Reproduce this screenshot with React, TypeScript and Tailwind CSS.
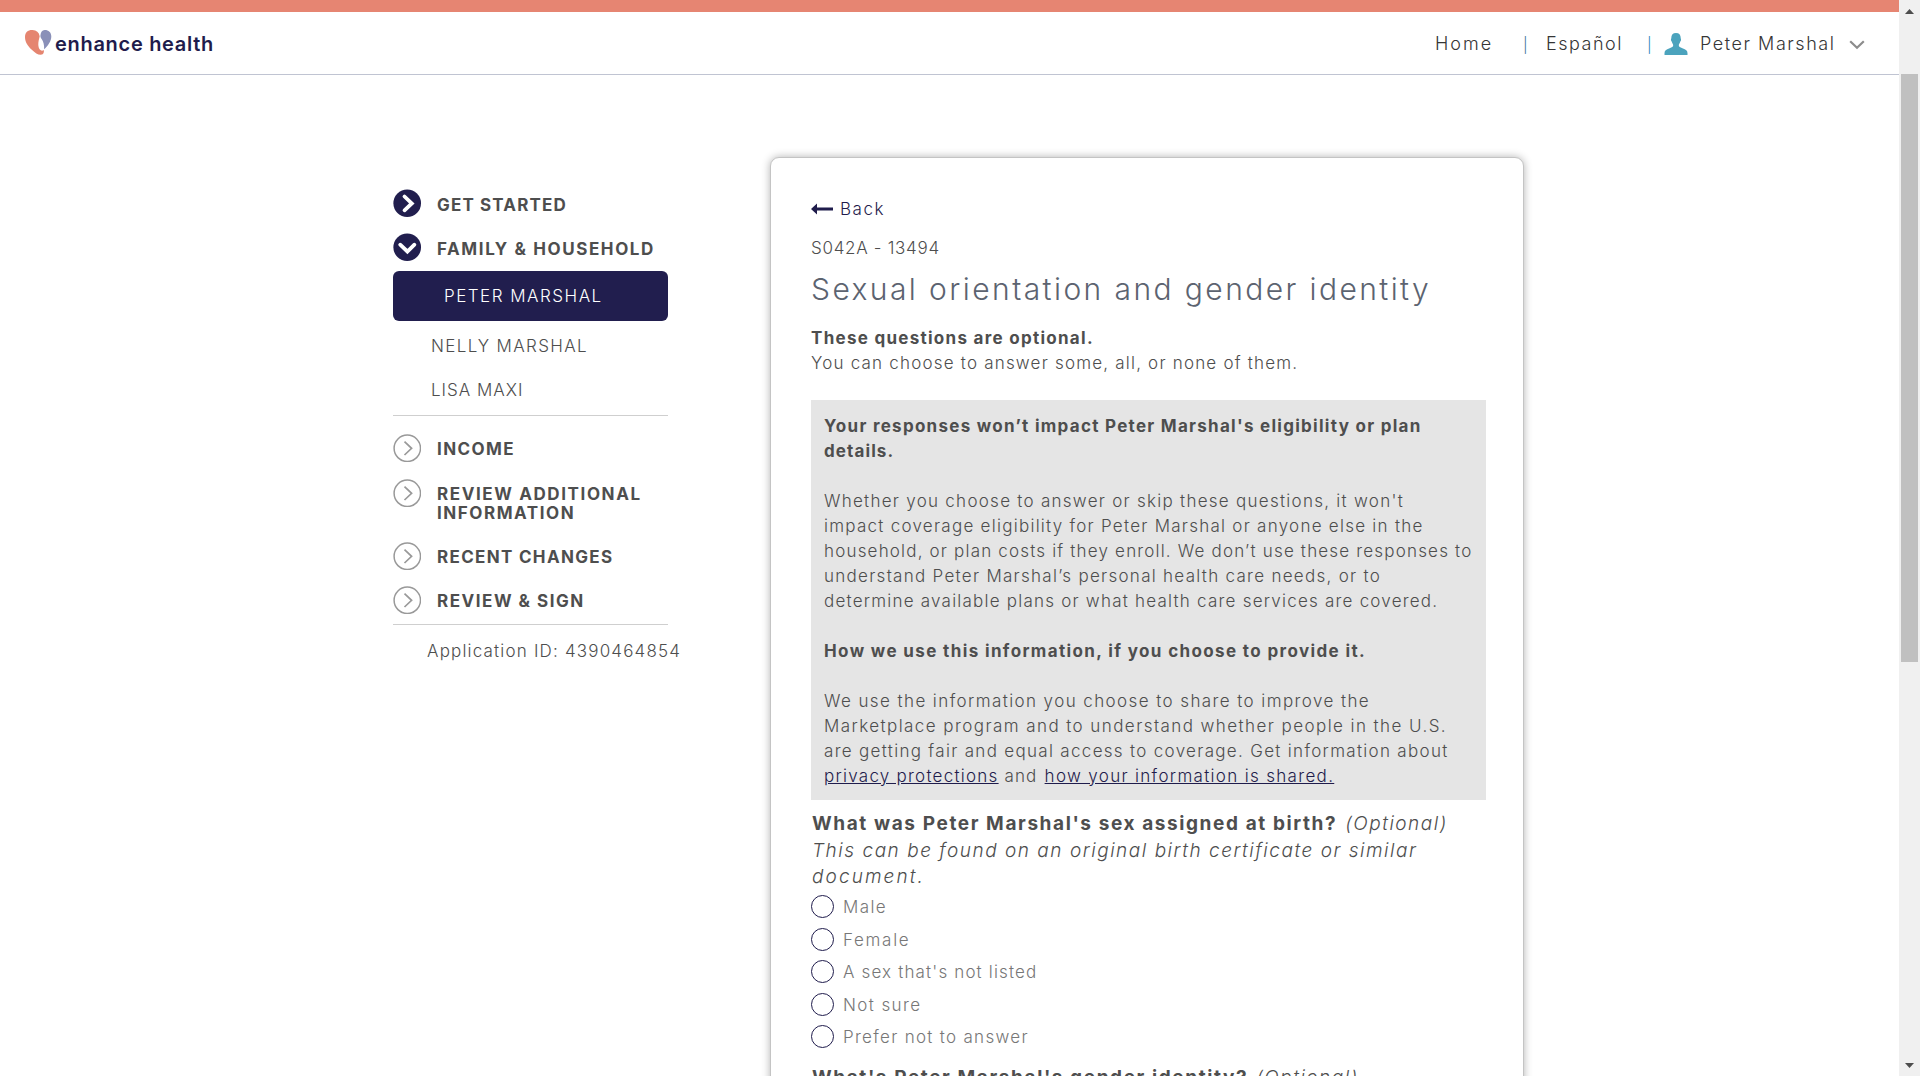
import type { ReactNode } from "react";

type Line = [text: string, tracking: string];

function Lines({ lines, className = "" }: { lines: Line[]; className?: string }) {
  return (
    <p className={className}>
      {lines.map(([text, tracking]) => (
        <span key={text} className={`block whitespace-nowrap ${tracking}`}>
          {text}
        </span>
      ))}
    </p>
  );
}

function Logo() {
  return (
    <a href="#" className="flex h-[62px] items-center pl-[24px]">
      <svg width="28" height="28" viewBox="0 0 28 28" className="shrink-0">
        <path
          d="M8.500 1.100C4 .9 1 3.600 1 8c0 5.300 3 9.300 6.800 12.700 3.200 3 5.900 5 8.800 5 2 0 3.300-1.300 3.300-3.300l-.1-1.300c-1.200.9-3 .9-4-.5-1-1.300-1.500-3-1.500-5.300 0-3.100.8-5.400 1.400-8.100C15 3.400 12.500 1.300 8.500 1.100z"
          fill="#e58570"
        />
        <path
          d="M20.600 1c3.800-.1 6.700 2.200 6.700 6.400 0 4.700-3.400 9.300-7.200 12.800.3-4-.7-7.800-2.500-10.200-1-1.300-1.400-2.500-1.100-4C16.900 3.300 18 1.100 20.600 1z"
          fill="#8a90b8"
        />
      </svg>
      <span className="ml-[3px] pt-[2px] text-[20px] leading-6 font-semibold tracking-[0.7px] text-[#1f1c4c]">
        enhance health
      </span>
    </a>
  );
}

function UserMenu() {
  return (
    <nav className="flex h-[62px] items-center pr-[34px] text-[18px] leading-7 whitespace-nowrap text-[#363636]">
      <a href="#" className="w-[88px] pt-[2px] tracking-[2px]">Home</a>
      <span className="w-[23px] pt-[3px] text-[15px] text-[#3d6f96]">|</span>
      <a href="#" className="w-[101px] pt-[2px] tracking-[1.5px]">Español</a>
      <span className="w-[17px] pt-[3px] text-[15px] text-[#1f86c0]">|</span>
      <svg width="24" height="22" viewBox="0 0 24 22" fill="#4ba3bd" className="mt-[2px]">
        <path d="M12 0c3.200 0 4.700 1.900 4.700 5 0 .8.500 1.200.3 2.200-.2.800-.7 1-.9 1.800-.4 1.500-1.300 1.900-1.300 3.300 0 1.600 1.200 2 3.600 2.900 3.600 1.200 5.100 2.300 5.100 5.100V22H.5v-1.700c0-2.800 1.500-3.900 5.100-5.100 2.400-.9 3.600-1.300 3.600-2.900 0-1.400-.9-1.800-1.300-3.300-.2-.8-.7-1-.9-1.800-.2-1 .3-1.400.3-2.200 0-3.100 1.500-5 4.700-5z" />
      </svg>
      <span className="ml-[12px] w-[149px] pt-[2px] tracking-[1.55px]">Peter Marshal</span>
      <svg width="16" height="10" viewBox="0 0 16 10" fill="none" stroke="#8c8c8c" strokeWidth="2.200" className="mt-[4px]">
        <path d="M1.200 1.200 8 7.800l6.800-6.600" />
      </svg>
    </nav>
  );
}

function StepIcon({ state }: { state: "done" | "open" | "todo" }) {
  if (state === "todo") {
    return (
      <svg width="28" height="28" viewBox="0 0 28 28" fill="none" stroke="#999" className="shrink-0">
        <circle cx="14.300" cy="14.300" r="13.200" strokeWidth="1.500" />
        <path d="M11.500 7.600 18.600 14.300l-7.100 6.700" strokeWidth="1.700" />
      </svg>
    );
  }
  return (
    <svg width="28" height="28" viewBox="0 0 28 28" fill="none" className="shrink-0">
      <circle cx="14.200" cy="14.200" r="13.800" fill="#211e4e" />
      <path
        d={state === "done" ? "M11.500 7.500 18.800 14.500l-7.300 6.800" : "M7.200 11.700l7.200 6.800 7-6.800"}
        stroke="#fff"
        strokeWidth="3.800"
        strokeLinecap="round"
      />
    </svg>
  );
}

function Step({ state, className = "", children }: { state: "done" | "open" | "todo"; className?: string; children: ReactNode }) {
  return (
    <div className={`flex items-start ${className}`}>
      <StepIcon state={state} />
      <div className={`ml-[16px] font-bold whitespace-nowrap ${state === "todo" ? "pt-[6px]" : "pt-[7px]"}`}>
        {children}
      </div>
    </div>
  );
}

function Sidebar() {
  return (
    <aside className="mt-[32px] w-[275px] shrink-0 text-[17px] leading-[19px] text-[#4e4e4e]">
      <Step state="done" className="h-[28px]"><span className="tracking-[1.15px]">GET STARTED</span></Step>
      <Step state="open" className="mt-[16px] h-[28px]"><span className="tracking-[1.6px]">FAMILY &amp; HOUSEHOLD</span></Step>
      <div className="mt-[10px] flex h-[50px] items-center rounded-[6px] bg-[#211e4e] pl-[51px] tracking-[1.5px] text-white">
        PETER MARSHAL
      </div>
      <div className="mt-[16px] pl-[38px] tracking-[1.35px]">NELLY MARSHAL</div>
      <div className="mt-[25px] pl-[38px] tracking-[1px]">LISA MAXI</div>
      <hr className="mt-[15px] border-[#cfcfcf]" />
      <Step state="todo" className="mt-[18px] h-[28px]"><span className="tracking-[1.4px]">INCOME</span></Step>
      <Step state="todo" className="mt-[17px] h-[43px]">
        <span className="block tracking-[1.6px]">REVIEW ADDITIONAL</span>
        <span className="block tracking-[1.55px]">INFORMATION</span>
      </Step>
      <Step state="todo" className="mt-[20px] h-[28px]"><span className="tracking-[1.32px]">RECENT CHANGES</span></Step>
      <Step state="todo" className="mt-[16px] h-[28px]"><span className="tracking-[1.52px]">REVIEW &amp; SIGN</span></Step>
      <hr className="mt-[10px] border-[#cfcfcf]" />
      <div className="mt-[17px] pl-[34px] whitespace-nowrap tracking-[1.18px]">Application ID: 4390464854</div>
    </aside>
  );
}

const OPTIONS: Line[] = [
  ["Male", "tracking-[1.4px]"],
  ["Female", "tracking-[1.7px]"],
  ["A sex that's not listed", "tracking-[1.15px]"],
  ["Not sure", "tracking-[1.4px]"],
  ["Prefer not to answer", "tracking-[1.3px]"],
];

function InfoBox() {
  return (
    <section className="mt-[24px] flex h-[400px] w-[675px] flex-col gap-[25px] bg-[#e5e5e5] pt-[14px] pl-[13px]">
      <Lines
        className="font-bold"
        lines={[
          ["Your responses won’t impact Peter Marshal's eligibility or plan", "tracking-[1.28px]"],
          ["details.", "tracking-[1.1px]"],
        ]}
      />
      <Lines
        lines={[
          ["Whether you choose to answer or skip these questions, it won't", "tracking-[1.27px]"],
          ["impact coverage eligibility for Peter Marshal or anyone else in the", "tracking-[1.26px]"],
          ["household, or plan costs if they enroll. We don’t use these responses to", "tracking-[1.18px]"],
          ["understand Peter Marshal’s personal health care needs, or to", "tracking-[1.28px]"],
          ["determine available plans or what health care services are covered.", "tracking-[1.22px]"],
        ]}
      />
      <Lines
        className="font-bold"
        lines={[["How we use this information, if you choose to provide it.", "tracking-[1.37px]"]]}
      />
      <div>
        <Lines
          lines={[
            ["We use the information you choose to share to improve the", "tracking-[1.41px]"],
            ["Marketplace program and to understand whether people in the U.S.", "tracking-[1.43px]"],
            ["are getting fair and equal access to coverage. Get information about", "tracking-[1.31px]"],
          ]}
        />
        <p className="flex whitespace-nowrap">
          <a href="#" className="tracking-[1.25px] text-[#1f1c4c] underline">privacy protections</a>
          <span className="w-[46px] pl-[6px] tracking-[1px]">and</span>
          <a href="#" className="tracking-[1.32px] text-[#1f1c4c] underline">how your information is shared.</a>
        </p>
      </div>
    </section>
  );
}

function FormCard() {
  return (
    <main className="ml-[102px] h-[1000px] w-[754px] shrink-0 rounded-[9px] border border-[#c4c4c4] bg-white pt-[39px] pl-[40px] text-[17px] leading-[25px] text-[#4e4e4e] shadow-[0_0_8px_rgba(0,0,0,0.3)]">
      <a href="#" className="flex h-[25px] items-center text-[#1f1c4c]">
        <svg width="22" height="12" viewBox="0 0 22 12" fill="#1f1c4c" className="mb-[2px]">
          <path d="M0 6 6 .5V4.600h16v2.800H6v4.100z" />
        </svg>
        <span className="ml-[7px] tracking-[1.5px]">Back</span>
      </a>
      <p className="mt-[14px] tracking-[0.7px]">S042A - 13494</p>
      <h1 className="mt-[8px] text-[30px] leading-[40px] font-light tracking-[2.42px] whitespace-nowrap text-[#5c6370]">
        Sexual orientation and gender identity
      </h1>
      <p className="mt-[17px] font-bold tracking-[1.28px]">These questions are optional.</p>
      <p className="tracking-[1.2px]">You can choose to answer some, all, or none of them.</p>
      <InfoBox />
      <div className="mt-[11px] pl-px text-[19px] leading-[26.500px] whitespace-nowrap">
        <p>
          <span className="font-bold tracking-[1.6px]">What was Peter Marshal's sex assigned at birth?</span>
          <i className="ml-[8px] tracking-[1.5px]">(Optional)</i>
        </p>
        <Lines
          className="italic"
          lines={[
            ["This can be found on an original birth certificate or similar", "tracking-[1.52px]"],
            ["document.", "tracking-[2.1px]"],
          ]}
        />
      </div>
      <div className="text-[#777]">
        {OPTIONS.map(([text, tracking]) => (
          <label key={text} className="flex h-[32.500px] items-center">
            <span className="size-[23px] rounded-full border border-[#1f1c4c]" />
            <span className={`ml-[9px] pt-[2px] whitespace-nowrap ${tracking}`}>{text}</span>
          </label>
        ))}
      </div>
      <p className="mt-[12px] pl-px text-[19px] leading-[26.500px] whitespace-nowrap">
        <span className="font-bold tracking-[1.6px]">What's Peter Marshal's gender identity?</span>
        <i className="ml-[8px] tracking-[1.5px]">(Optional)</i>
      </p>
    </main>
  );
}

function Scrollbar() {
  return (
    <div className="flex h-full w-[21px] shrink-0 flex-col items-center bg-[#f0f0f0]">
      <svg width="9" height="5" viewBox="0 0 9 5" fill="#4d4d4d" className="mt-[9px]">
        <path d="M4.500 0 9 5H0z" />
      </svg>
      <div className="mt-[60px] h-[588px] w-[17px] bg-[#c0c0c0]" />
      <svg width="9" height="5" viewBox="0 0 9 5" fill="#4d4d4d" className="mt-auto mb-[8px]">
        <path d="M0 0h9L4.500 5z" />
      </svg>
    </div>
  );
}

export default function App() {
  return (
    <div className="flex h-[1076px] w-[1920px] overflow-hidden bg-white font-['Inter','Open_Sans',sans-serif] font-light">
      <div className="flex h-full flex-1 flex-col overflow-hidden">
        <header className="flex h-[75px] shrink-0 items-start justify-between border-t-[12px] border-b border-t-[#e68572] border-b-[#c0c4d2]">
          <Logo />
          <UserMenu />
        </header>
        <div className="flex min-h-0 flex-1 items-start overflow-hidden pt-[82px] pl-[393px]">
          <Sidebar />
          <FormCard />
        </div>
      </div>
      <Scrollbar />
    </div>
  );
}
